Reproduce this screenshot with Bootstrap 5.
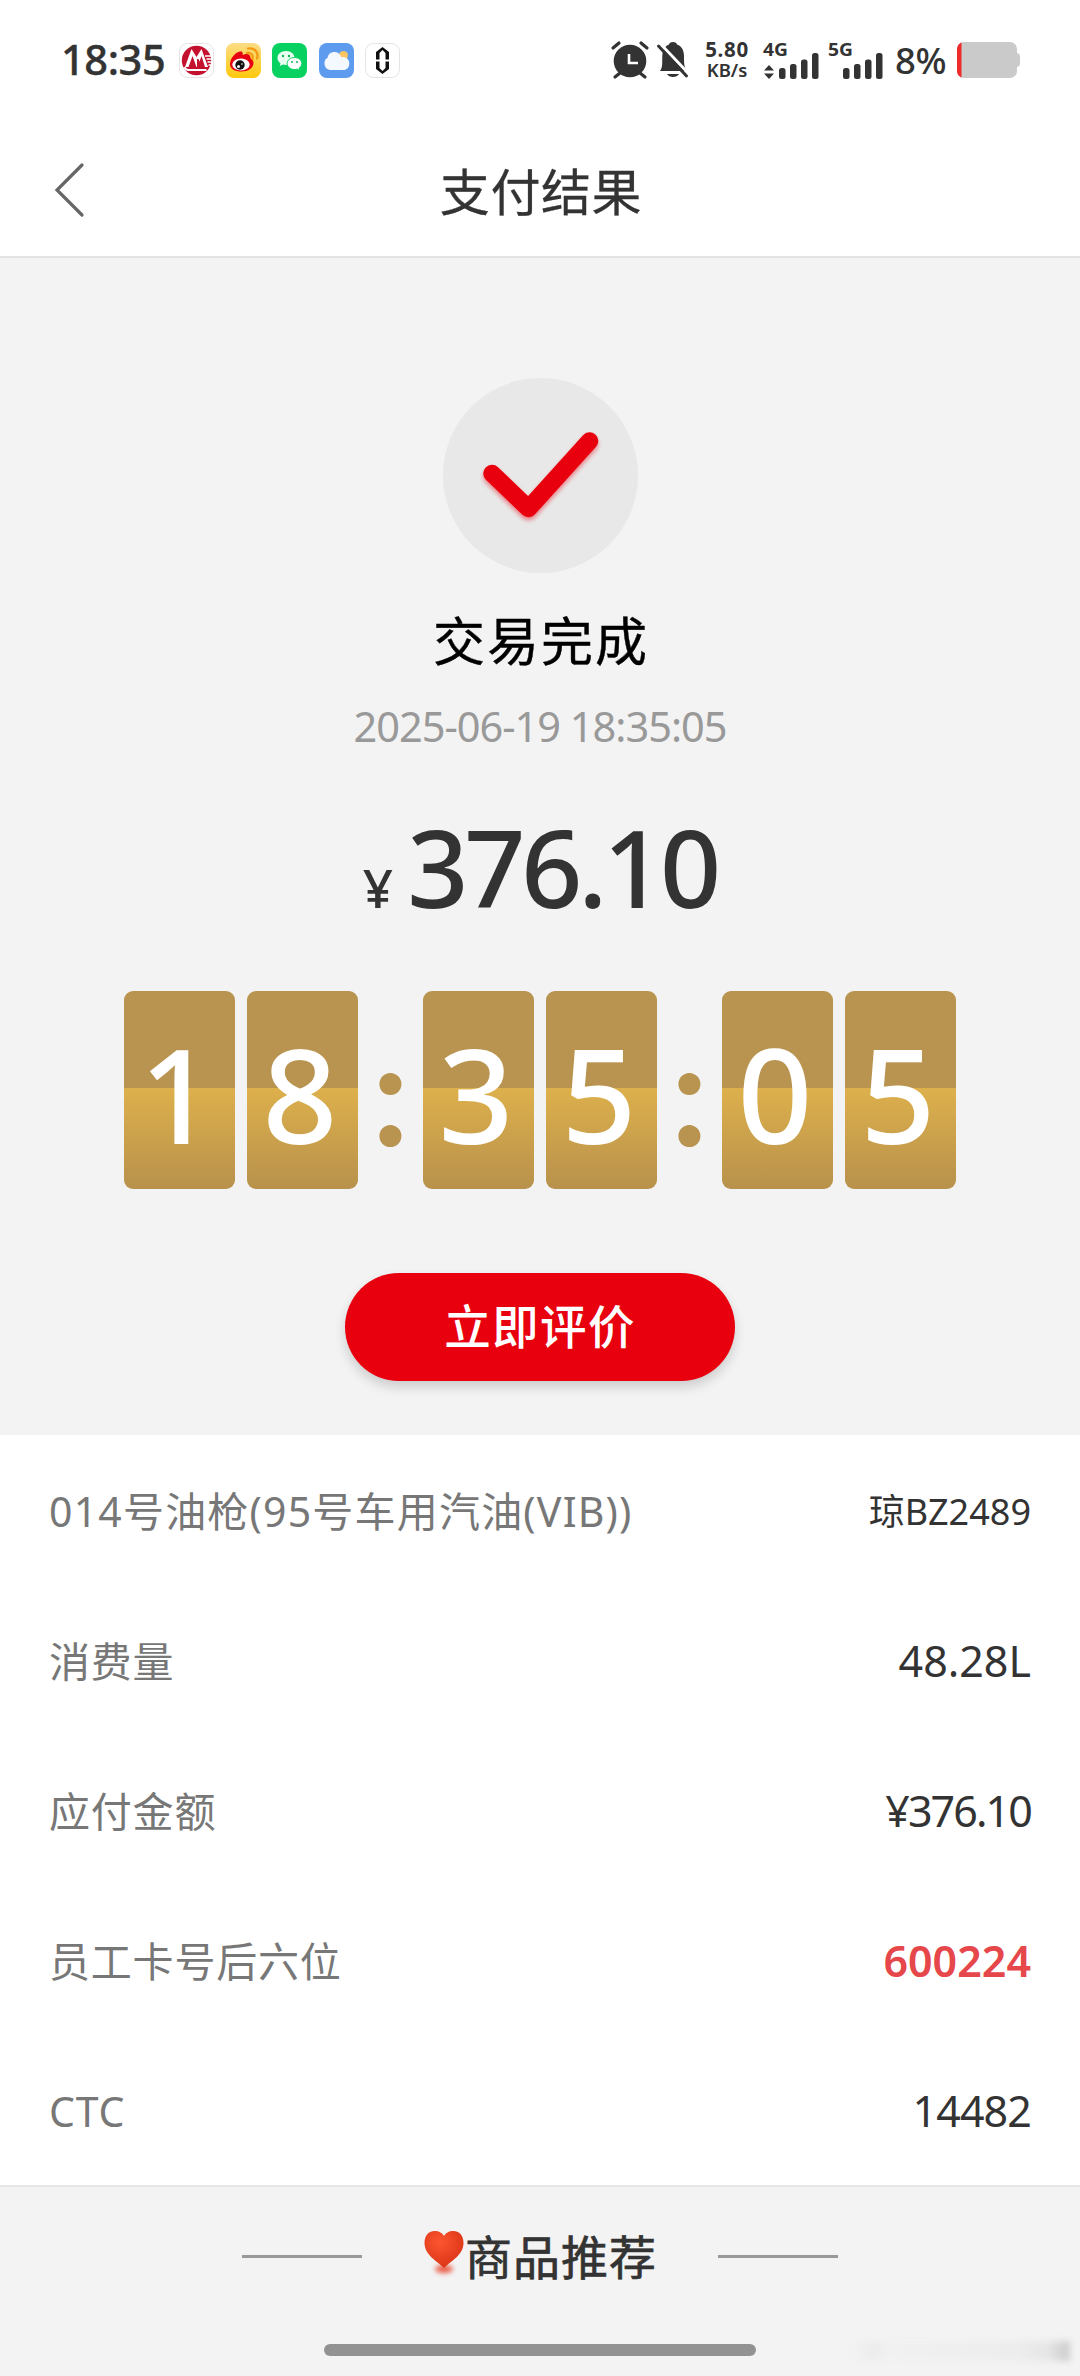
<!DOCTYPE html>
<html lang="zh-CN">
<head>
<meta charset="utf-8">
<meta name="viewport" content="width=device-width, initial-scale=1">
<title>支付结果</title>
<link href="https://cdn.jsdelivr.net/npm/bootstrap@5.3.0/dist/css/bootstrap.min.css" rel="stylesheet">
<style>
body{font-family:"Noto Sans","Noto Sans CJK SC",sans-serif;color:#333;background:#fff;width:1080px;height:2376px;overflow:hidden}
svg{display:block;flex:none;overflow:visible}
.status{height:120px;padding:0 60px 0 61px;line-height:1}
.clock{font-size:41.5px;font-weight:500;width:118px;letter-spacing:-.4px;-webkit-text-stroke:.4px}
.apps{gap:11.6px}
.speed{width:50px;margin-left:13px;text-align:center;white-space:nowrap}
.rate-num{font-size:20.5px;line-height:20px;font-weight:700;letter-spacing:.7px}
.rate-unit{font-size:18.5px;line-height:22px;font-weight:600}
.batt-pct{font-size:36.5px;font-weight:500;margin-left:11px;width:54px;white-space:nowrap;letter-spacing:-.3px}
.net-a{margin-left:11px}
.net-b{margin-left:9px}
.titlebar{height:138px;padding:4px 54px 0;border-bottom:2px solid #e3e3e3}
.titlebar h1{font-size:50px;font-weight:400;letter-spacing:.6px;line-height:60px;padding:3px 0 0 2px;-webkit-text-stroke:.3px}
.side-slot{width:32px}
.result{height:1177px;background:#f3f3f3;padding-top:120px}
.done{font-size:52px;font-weight:400;-webkit-text-stroke:.4px;letter-spacing:2px;line-height:60px;margin-top:38px;padding-left:2px;color:#000}
.stamp{font-size:41.5px;line-height:50px;color:#999;margin-top:30px;letter-spacing:-1px}
.price{margin-top:56px;height:120px;font-weight:500;line-height:120px}
.price .yen{font-size:53px}
.price .amount{font-size:107px;letter-spacing:-4.2px;margin-left:14px}
.flip{margin-top:64px;height:198px}
.pair{gap:12px}
.tile{width:111px;height:198px;padding-right:5px;border-radius:9px;background:linear-gradient(#b99350 0 97px,#ddb04c 97px,#b8914c 100%);color:#fff;font-size:131px;font-weight:500;line-height:205px;text-align:center}
.colon{width:65px;text-align:center;color:#b99350;font-family:Lato,sans-serif;font-size:145px;font-weight:700;line-height:199px}
.rate{width:390px;height:108px;margin-top:84px;background:#e8000f;border:0;color:#fff;font-size:46.5px;font-weight:500;letter-spacing:1.4px;box-shadow:0 6px 12px rgba(0,0,0,.16)}
.rate:hover{background:#e8000f;color:#fff}
.details{height:752px;border-bottom:2px solid #e6e6e6}
.line-item{height:150px;padding:3px 49px 0 49px}
.line-item dt{font-size:41px;font-weight:400;color:#777;letter-spacing:.8px}
.line-item dt.product{letter-spacing:1.2px}
.line-item dd{font-size:43px;margin:0}
.line-item dd.plate{font-size:36px}
.line-item dd.money{letter-spacing:-1.9px}
.line-item dd.code{letter-spacing:-.9px}
.line-item dd.staff{font-weight:600;color:#e5474b}
.recommend{height:189px;background:#f3f3f3}
.rule{width:120px;height:3px;background:#999}
.rec-head{margin-top:38px}
.rec-mid{margin:0 61px}
.rec-title{font-size:47px;font-weight:400;-webkit-text-stroke:.7px;letter-spacing:1px;line-height:60px;padding-top:2px}
.homebar{width:432px;height:12px;border-radius:6px;background:#929292;margin-top:57px}
.haze{position:absolute;right:10px;bottom:15px;width:218px;height:20px;background:linear-gradient(90deg,#f3f3f300,#ececec 10%,#f1f1f1 16%,#ededed 75%,#e6e6e6 90%,#cbcbcb);filter:blur(3px)}
</style>
</head>
<body>
<div class="position-relative d-flex flex-column">
<header class="status d-flex align-items-center">
  <div class="clock">18:35</div>
  <div class="apps d-flex">
    <svg width="35" height="35" viewBox="0 0 35 35"><rect x=".5" y=".5" width="34" height="34" rx="8" fill="#fff" stroke="#e4e4e4"/><circle cx="17.500" cy="17.500" r="14.700" fill="#c4112f"/><path d="M6 24 12.500 6 17.500 14 22.500 6 29 24h-6l-3.500-8-1.500 0v8h-3v-8L12 24Z" fill="#fff"/><path d="m9.500 24 4-11 4 11ZM18.500 24l4-11 3.500 11Z" fill="#c4112f"/><path d="M5.500 24q1 3 4 3h18" fill="none" stroke="#fff" stroke-width="2"/><path d="M26 13h7M27.500 16h6M28.500 19h5M29.500 22h3" stroke="#fff" stroke-width="1.300"/></svg>
    <svg width="35" height="35" viewBox="0 0 35 35"><defs><linearGradient id="wb" x2="0" y2="1"><stop stop-color="#fbdc85"/><stop offset="1" stop-color="#ffc90b"/></linearGradient></defs><rect width="35" height="35" rx="8" fill="url(#wb)"/><path d="M4 21C4 15 10 9 14 8.500c3-.3 3 2 2.500 3.500 4-1.600 8-1.500 8 3 0 1 3 1.500 3 5 0 5-5.500 8.500-12 8.500S4 26 4 21Z" fill="#e60012"/><ellipse cx="15" cy="21.500" rx="8.700" ry="6" fill="#fff"/><circle cx="14" cy="22" r="4.700" fill="#111"/><circle cx="12.500" cy="23.500" r="1.500" fill="#fff"/><circle cx="16" cy="21" r=".8" fill="#fff"/><path d="M21 10c4-1 6.500 2 5.500 6M22 5.500c6.500-1.200 11 4 9 10" fill="none" stroke="#f39a14" stroke-width="2.200" stroke-linecap="round"/></svg>
    <svg width="35" height="35" viewBox="0 0 35 35"><rect width="35" height="35" rx="8" fill="#07d160"/><path d="M14 8c-5 0-8.500 3-8.500 7 0 2.300 1.200 4 3 5.200L7.800 23l3.200-1.500c1 .3 2 .4 3 .4 5 0 8.500-3 8.500-6.900S19 8 14 8Z" fill="#eafff2"/><path d="M22.500 14.500c-4.300 0-7.300 2.700-7.300 6s3 6 7.300 6c1 0 1.800-.1 2.600-.4l2.600 1.400-.6-2.400c1.700-1.100 2.700-2.700 2.700-4.600 0-3.300-3-6-7.300-6Z" fill="#fff" stroke="#07d160"/><g fill="#0bb955"><circle cx="11" cy="13" r="1.200"/><circle cx="17" cy="13" r="1.200"/><circle cx="20" cy="19" r="1"/><circle cx="25" cy="19" r="1"/></g></svg>
    <svg width="35" height="35" viewBox="0 0 35 35"><rect width="35" height="35" rx="8" fill="#5c9bed"/><circle cx="24.500" cy="12.500" r="4.500" fill="#f8c560"/><path d="M11 27a6.200 6.200 0 0 1-5.500-7c0-3 1.500-4.500 3-5C9 11 12 9 15.500 9s5.700 2 6.800 5.200c4.200-.8 8 2 8 6.200S27.500 27 24 27Z" fill="#f4f8ff"/></svg>
    <svg width="35" height="35" viewBox="0 0 35 35"><rect x=".5" y=".5" width="34" height="34" rx="8" fill="#fff" stroke="#e4e4e4"/><path d="M17.500 4 24 9v7.500h-3.500V10l-3-3-3 3v6.500H11V9ZM17.500 31 24 26v-7.500h-3.500V25l-3 3-3-3v-6.500H11V26Z" fill="#111"/></svg>
  </div>
  <div class="d-flex align-items-center ms-auto">
    <svg width="38" height="38" viewBox="0 0 38 38"><path d="m9 32-5 4M29 32l5 4M2 7l6-5M36 7l-6-5" stroke="#333" stroke-width="3.200" stroke-linecap="round"/><circle cx="19" cy="20" r="16.300" fill="#333"/><path d="M18 13v9h9" fill="none" stroke="#fff" stroke-width="2.600"/></svg>
    <svg class="ms-2" width="32" height="38" viewBox="0 0 32 38"><path d="M3 30c3-4 2-8 2.300-15C5.600 8 9 4.500 12 3.500 13 .3 19 .3 20 3.500c3.500 1 7 4.500 7 11.500 0 7 0 11 3 15ZM10 33h12c-2 4-10 4-12 0Z" fill="#333"/><path d="M4 3.500 33 34" stroke="#fff" stroke-width="3"/><path d="M1.500 5 29.500 35" stroke="#333" stroke-width="3" stroke-linecap="round"/></svg>
    <div class="speed d-flex flex-column"><span class="rate-num">5.80</span><span class="rate-unit">KB/s</span></div>
    <svg class="net-a" width="56" height="38" viewBox="0 0 56 38" fill="#333"><text x="0" y="15" font-size="18.500" font-weight="700" textLength="25" lengthAdjust="spacingAndGlyphs">4G</text><path d="m6 24 5 5.500H1ZM6 38l5-5.500H1Z"/><rect x="16" y="27" width="6.500" height="11" rx="2.500"/><rect x="27" y="23" width="6.500" height="15" rx="2.500"/><rect x="38" y="18.500" width="6.500" height="19.500" rx="2.500"/><rect x="49" y="12" width="6.500" height="26" rx="2.500"/></svg>
    <svg class="net-b" width="56" height="38" viewBox="0 0 56 38" fill="#333"><text x="0" y="15" font-size="18.500" font-weight="700" textLength="25" lengthAdjust="spacingAndGlyphs">5G</text><rect x="15" y="27" width="6.500" height="11" rx="2.500"/><rect x="26" y="23" width="6.500" height="15" rx="2.500"/><rect x="37" y="18.500" width="6.500" height="19.500" rx="2.500"/><rect x="48" y="12" width="6.500" height="26" rx="2.500"/></svg>
    <div class="batt-pct">8%</div>
    <svg class="ms-2" width="63" height="36" viewBox="0 0 63 36"><defs><clipPath id="bt"><rect width="60" height="36" rx="7"/></clipPath></defs><g clip-path="url(#bt)"><rect width="60" height="36" fill="#cacaca"/><rect width="4.500" height="36" fill="#ee2a2a"/></g><path d="M60 11q3 1 3 3.500v7q0 2.500-3 3.500Z" fill="#cacaca"/></svg>
  </div>
</header>
<nav class="titlebar d-flex align-items-center justify-content-between">
  <svg class="side-slot" width="32" height="54" viewBox="0 0 32 54"><path d="M28 2 3 27l25 25" fill="none" stroke="#666" stroke-width="3.200" stroke-linecap="round"/></svg>
  <h1 class="mb-0">支付结果</h1>
  <span class="side-slot"></span>
</nav>
<main>
  <section class="result d-flex flex-column align-items-center">
    <svg width="195" height="195" viewBox="0 0 195 195"><circle cx="97.500" cy="97.500" r="97.500" fill="#e8e8e8"/><path d="m49 95.500 36.500 35L146.500 63" fill="none" stroke="#e8000f" stroke-width="17.500" stroke-linecap="round" stroke-linejoin="round" style="filter:drop-shadow(0 3px 2px rgba(232,0,15,.45))"/></svg>
    <div class="done">交易完成</div>
    <div class="stamp">2025-06-19 18:35:05</div>
    <div class="price d-flex align-items-baseline"><span class="yen">¥</span><span class="amount">376.10</span></div>
    <div class="flip d-flex">
      <div class="pair d-flex"><div class="tile">1</div><div class="tile">8</div></div>
      <div class="colon">:</div>
      <div class="pair d-flex"><div class="tile">3</div><div class="tile">5</div></div>
      <div class="colon">:</div>
      <div class="pair d-flex"><div class="tile">0</div><div class="tile">5</div></div>
    </div>
    <button class="rate btn rounded-pill p-0" type="button">立即评价</button>
  </section>
  <dl class="details m-0">
    <div class="line-item d-flex align-items-center justify-content-between"><dt class="product">014号油枪(95号车用汽油(VIB))</dt><dd class="plate">琼BZ2489</dd></div>
    <div class="line-item d-flex align-items-center justify-content-between"><dt>消费量</dt><dd>48.28L</dd></div>
    <div class="line-item d-flex align-items-center justify-content-between"><dt>应付金额</dt><dd class="money">¥376.10</dd></div>
    <div class="line-item d-flex align-items-center justify-content-between"><dt>员工卡号后六位</dt><dd class="staff">600224</dd></div>
    <div class="line-item d-flex align-items-center justify-content-between"><dt>CTC</dt><dd class="code">14482</dd></div>
  </dl>
</main>
<footer class="recommend d-flex flex-column align-items-center">
  <div class="rec-head d-flex align-items-center">
    <span class="rule"></span>
    <div class="rec-mid d-flex align-items-center"><svg width="42" height="50" viewBox="0 0 42 50"><defs><radialGradient id="hg" cx=".4" cy=".3" r=".7"><stop stop-color="#fb5630"/><stop offset="1" stop-color="#dc3418"/></radialGradient></defs><ellipse cx="21" cy="38" rx="9" ry="4" fill="#ea5a45" style="filter:blur(2.500px)"/><path d="M21 37C14 30 1.500 24 1.500 12 1.500 4 6 0 11.500 0 16 0 19.500 2 21 5 22.500 2 26 0 30.500 0 36 0 40.500 4 40.500 12 40.500 24 28 30 21 37Z" fill="url(#hg)"/></svg><span class="rec-title">商品推荐</span></div>
    <span class="rule"></span>
  </div>
  <div class="homebar"></div>
</footer>
<div class="haze"></div>
</div>
<script src="https://cdn.jsdelivr.net/npm/bootstrap@5.3.0/dist/js/bootstrap.bundle.min.js"></script>
</body>
</html>
